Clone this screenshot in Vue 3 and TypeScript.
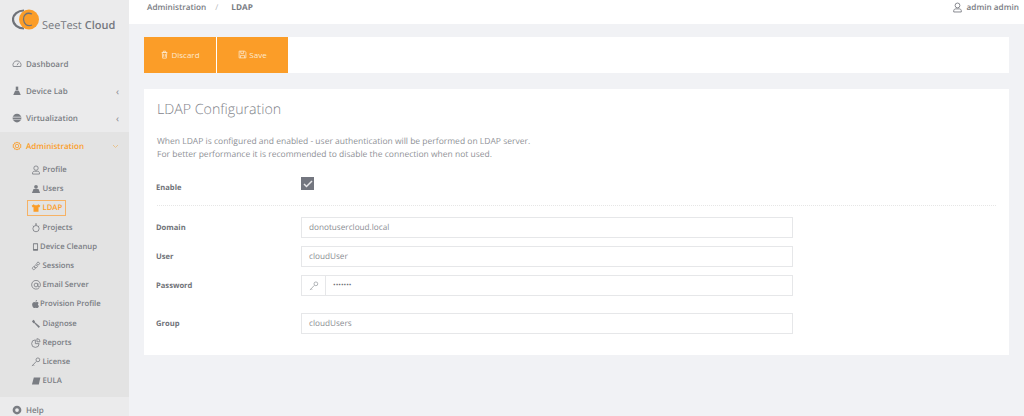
<script setup lang="ts">
interface Shape {
  d: string;
  solid?: boolean;
}

interface SubItem {
  label: string;
  icon: string;
  active?: boolean;
  narrow?: boolean;
}

const icons: Record<string, Shape[]> = {
  gauge: [{ d: 'M2 12a6.500 6.500 0 1 1 12 0zM8 10l2.500-4' }],
  flask: [
    { d: 'M6 1h4v6h-4z', solid: true },
    { d: 'M5 7.500h6l3 7H2z', solid: true }
  ],
  globe: [{ d: 'M8 1a7 7 0 1 1 0 14A7 7 0 0 1 8 1zM1 6h14v1H1zM1 9.500h14v1H1z', solid: true }],
  gear: [{ d: 'M8 1.500l1.500 1.800 2.300-.4.500 2.300 2.200 1L13.400 8l1.100 1.800-2.200 1-.5 2.300-2.300-.4L8 14.500l-1.500-1.800-2.300.4-.5-2.300-2.200-1L2.600 8 1.500 6.200l2.200-1 .5-2.300 2.300.4zM8 5.200a2.800 2.800 0 1 0 0 5.600 2.800 2.800 0 0 0 0-5.600z' }],
  user: [{ d: 'M8 1.500a3.500 3.500 0 1 1 0 7 3.500 3.500 0 0 1 0-7zM2.500 14.500v-2c0-1.500 1.500-2.500 3-2.500h5c1.500 0 3 1 3 2.500v2z' }],
  users: [
    { d: 'M8 1.500a3 3 0 1 1 0 6 3 3 0 0 1 0-6z', solid: true },
    { d: 'M4 8h8l2.500 6.500h-13z', solid: true }
  ],
  team: [{ d: 'M4.500 2L6 3.500h4L11.500 2 15 4.500 13 7l-1-.5V14H4V6.500L3 7 1 4.500z', solid: true }],
  bulb: [{ d: 'M8 4a5 5 0 1 1 0 10A5 5 0 0 1 8 4zM6.500 1.500h3M8 1.500V4M3 4.500l1.500 1.500M13 4.500L11.500 6' }],
  phone: [{ d: 'M4.500 1.500h7a1 1 0 0 1 1 1v11a1 1 0 0 1-1 1h-7a1 1 0 0 1-1-1v-11a1 1 0 0 1 1-1zM5 3v8.500h6V3z', solid: true }],
  link: [{ d: 'M2.500 10.500a2.200 2.200 0 1 1 3 3 2.200 2.200 0 0 1-3-3zM6 7.500a2.200 2.200 0 1 1 3 3 2.200 2.200 0 0 1-3-3zM9.500 3a2.200 2.200 0 1 1 3 3 2.200 2.200 0 0 1-3-3z' }],
  at: [{ d: 'M13 12.500A7 7 0 1 1 15 8v1a2 2 0 0 1-4 0V5M11 8a3 3 0 1 1-6 0 3 3 0 0 1 6 0z' }],
  apple: [
    { d: 'M8 5c1-.6 2.800-1.200 4.300-.2.700.4 1.100 1 1.400 1.400-2.200 1.300-1.800 4.300.5 5.200-.7 1.800-2 3.800-3.200 3.800-1 0-1.500-.6-2.600-.6s-1.700.6-2.600.6C4 15.200 2 12 2 9c0-3 2-4.700 3.800-4.700.9 0 1.600.4 2.200.7z', solid: true },
    { d: 'M8 3.800C8 2.300 9.200 1 10.800.8c.1 1.700-1.200 3-2.800 3z', solid: true }
  ],
  wrench: [{ d: 'M1.500 3.500L4 1l2.500 2.500-.7 1.300 8.500 7.200-1.800 2.300L5 6.200l-1.200.6z', solid: true }],
  chart: [{ d: 'M7 3a6 6 0 1 0 6 6H7zM9.500 1v5h5a5 5 0 0 0-5-5z' }],
  key: [{ d: 'M11 1.500a3 3 0 1 1 0 6 3 3 0 0 1 0-6zM8.500 7L1.500 14.500M3.500 12.500l1.500 1.500' }],
  book: [{ d: 'M4.500 2.500H15l-2.500 11H1.500z', solid: true }],
  lifebuoy: [{ d: 'M8 1a7 7 0 1 1 0 14A7 7 0 0 1 8 1zM8 5a3 3 0 1 0 0 6 3 3 0 0 0 0-6z', solid: true }],
  trash: [{ d: 'M3 4.500h10M6 4.500V2h4v2.500M4 4.500l.7 10h6.600l.7-10zM6.500 7v5M9.500 7v5' }],
  save: [{ d: 'M2 2h10l2 2v10H2zM5 2v4h5V2M4.500 14V9.500h7V14' }]
};

const subItems: SubItem[] = [
  { label: 'Profile', icon: 'user' },
  { label: 'Users', icon: 'users' },
  { label: 'LDAP', icon: 'team', active: true },
  { label: 'Projects', icon: 'bulb' },
  { label: 'Device Cleanup', icon: 'phone', narrow: true },
  { label: 'Sessions', icon: 'link' },
  { label: 'Email Server', icon: 'at' },
  { label: 'Provision Profile', icon: 'apple', narrow: true },
  { label: 'Diagnose', icon: 'wrench' },
  { label: 'Reports', icon: 'chart' },
  { label: 'License', icon: 'key' },
  { label: 'EULA', icon: 'book' }
];

const topItems = [
  { label: 'Dashboard', icon: 'gauge', arrow: false },
  { label: 'Device Lab', icon: 'flask', arrow: true },
  { label: 'Virtualization', icon: 'globe', arrow: true }
];

const fields = [
  { label: 'Domain', value: 'donotusercloud.local' },
  { label: 'User', value: 'cloudUser' }
];
</script>

<template>
  <div class="page">
    <aside class="sidebar">
      <div class="logo">
        <svg class="logo-mark" width="28" height="26" viewBox="0 0 28 26">
          <path d="M12 1.500A11 9 0 0 0 12 19.500" fill="none" stroke="#6f7278" stroke-width="2.200" />
          <circle cx="17" cy="10.500" r="10" fill="#fb9d28" />
          <path d="M20 5C14 2.500 11 7 11.500 10.500 12 15 15 18 20 16" fill="none" stroke="#6f7278" stroke-width="1.300" />
        </svg>
        <span class="logo-text">SeeTest <b>Cloud</b></span>
      </div>

      <nav class="nav">
        <a v-for="item in topItems" :key="item.label" class="nav-item">
          <svg class="icon" viewBox="0 0 16 16">
            <path
              v-for="shape in icons[item.icon]"
              :key="shape.d"
              :d="shape.d"
              :class="shape.solid ? 'solid' : 'line'"
            />
          </svg>
          <span>{{ item.label }}</span>
          <span v-if="item.arrow" class="chevron">‹</span>
        </a>

        <div class="group">
          <a class="nav-item nav-item--open">
            <svg class="icon" viewBox="0 0 16 16">
              <path :d="icons.gear[0].d" class="line" />
            </svg>
            <span>Administration</span>
            <svg class="chevron-down" width="7" height="5" viewBox="0 0 7 5">
              <path d="M1 1l2.500 2.500L6 1" />
            </svg>
          </a>
          <a
            v-for="sub in subItems"
            :key="sub.label"
            class="sub-item"
            :class="{ 'sub-item--active': sub.active, 'sub-item--narrow': sub.narrow }"
          >
            <svg class="icon icon--sub" viewBox="0 0 16 16">
              <path
                v-for="shape in icons[sub.icon]"
                :key="shape.d"
                :d="shape.d"
                :class="shape.solid ? 'solid' : 'line'"
              />
            </svg>
            <span>{{ sub.label }}</span>
          </a>
        </div>

        <a class="nav-item nav-item--help">
          <svg class="icon" viewBox="0 0 16 16">
            <path :d="icons.lifebuoy[0].d" class="solid" />
          </svg>
          <span>Help</span>
        </a>
      </nav>
    </aside>

    <div class="main">
      <header class="topbar">
        <div class="crumbs">
          <span>Administration</span>
          <span class="crumb-sep">/</span>
          <b>LDAP</b>
        </div>
        <div class="account">
          <svg class="icon icon--account" viewBox="0 0 16 16">
            <path :d="icons.user[0].d" class="line" />
          </svg>
          <span>admin admin</span>
        </div>
      </header>

      <div class="content">
        <div class="toolbar">
          <button class="btn" type="button">
            <svg class="btn-icon" viewBox="0 0 16 16"><path :d="icons.trash[0].d" /></svg>
            Discard
          </button>
          <button class="btn" type="button">
            <svg class="btn-icon" viewBox="0 0 16 16"><path :d="icons.save[0].d" /></svg>
            Save
          </button>
        </div>

        <section class="panel">
          <h1>LDAP Configuration</h1>
          <p class="intro">
            When LDAP is configured and enabled - user authentication will be performed on LDAP server.<br />
            For better performance it is recommended to disable the connection when not used.
          </p>

          <div class="row row--enable">
            <label>Enable</label>
            <span class="checkbox">
              <svg width="10" height="8" viewBox="0 0 10 8"><path d="M1 4l2.500 2.500L9 1" /></svg>
            </span>
          </div>

          <div class="divider"></div>

          <div v-for="field in fields" :key="field.label" class="row">
            <label>{{ field.label }}</label>
            <div class="input">{{ field.value }}</div>
          </div>

          <div class="row">
            <label>Password</label>
            <div class="input input--group">
              <span class="addon">
                <svg class="addon-icon" viewBox="0 0 16 16"><path :d="icons.key[0].d" /></svg>
              </span>
              <span class="dots">•••••••</span>
            </div>
          </div>

          <div class="row row--group">
            <label>Group</label>
            <div class="input">cloudUsers</div>
          </div>
        </section>
      </div>
    </div>
  </div>
</template>

<style>
html,
body {
  margin: 0;
  background: #f1f2f5;
}
</style>

<style scoped>
.page {
  display: flex;
  width: 1024px;
  height: 416px;
  overflow: hidden;
  font-family: "Open Sans", "Liberation Sans", sans-serif;
  color: #6f7278;
  text-rendering: geometricPrecision;
}

.sidebar {
  width: 129px;
  flex: none;
  background: #ebebec;
}

.logo {
  display: flex;
  align-items: flex-start;
  gap: 2px;
  height: 50.500px;
  padding: 9px 0 0 12px;
  box-sizing: border-box;
}

.logo-mark {
  flex: none;
}

.logo-text {
  margin-top: 9px;
  font-size: 11px;
  line-height: 16px;
  white-space: nowrap;
  color: #75787e;
}

.logo-text b {
  font-weight: 600;
}

.nav-item {
  display: flex;
  align-items: center;
  height: 27.200px;
  padding: 0 10px 0 12px;
  font-size: 8px;
  font-weight: 600;
  color: #7a7d83;
}

.icon {
  width: 10px;
  height: 10px;
  flex: none;
  margin-right: 4px;
}

.icon--sub {
  margin-right: 1.500px;
}

.icon .line {
  fill: none;
  stroke: currentColor;
  stroke-width: 1.300;
}

.icon .solid {
  fill: currentColor;
  fill-rule: evenodd;
}

.chevron {
  margin-left: auto;
  font-size: 10px;
  font-weight: 400;
  line-height: 10px;
  color: #8b8e93;
}

.chevron-down {
  margin-left: auto;
}

.chevron-down path {
  fill: none;
  stroke: #e9c48f;
  stroke-width: 1;
}

.group {
  height: 264.500px;
  background: #e3e3e3;
}

.nav-item--open {
  height: 28.400px;
  color: #fb9d28;
}

.sub-item {
  display: flex;
  align-items: center;
  height: 19.200px;
  padding-left: 31px;
  box-sizing: border-box;
  font-size: 7.700px;
  font-weight: 600;
  color: #7a7d83;
}

.sub-item--narrow .icon--sub {
  width: 9px;
  margin-right: 0;
}

.sub-item--active {
  width: fit-content;
  height: 16px;
  margin: 1.600px 0 1.600px 27px;
  padding: 0 2.500px 0 3px;
  border: 1.500px solid #f6b265;
  color: #fb9d28;
}

.nav-item--help {
  height: 27px;
}

.main {
  flex: 1;
  display: flex;
  flex-direction: column;
  min-width: 0;
}

.topbar {
  display: flex;
  justify-content: space-between;
  align-items: flex-start;
  height: 24px;
  padding: 0 5px 0 18px;
  box-sizing: border-box;
  background: #fff;
  font-size: 8.200px;
  font-weight: 600;
  line-height: 15px;
  color: #7a7d83;
}

.crumbs {
  display: flex;
}

.crumbs b {
  font-weight: 700;
}

.crumb-sep {
  margin: 0 13px 0 9px;
  font-weight: 400;
  color: #b5b7ba;
}

.account {
  display: flex;
  align-items: center;
}

.icon--account {
  width: 11px;
  height: 11px;
}

.content {
  flex: 1;
  padding: 13px 15px 0;
  background: #f1f2f5;
}

.toolbar {
  display: flex;
  gap: 1px;
  height: 36px;
  margin-bottom: 16px;
  background: #fff;
}

.btn {
  display: flex;
  align-items: center;
  justify-content: center;
  gap: 2px;
  width: 72px;
  padding: 0 0 1px;
  border: none;
  background: #fb9d28;
  color: #fde9d0;
  font-family: inherit;
  font-size: 8px;
}

.btn + .btn {
  width: 71px;
}

.btn-icon {
  width: 9px;
  height: 9px;
}

.btn-icon path {
  fill: none;
  stroke: #fde9d0;
  stroke-width: 1.400;
}

.panel {
  height: 266px;
  padding: 10px 13px 0;
  box-sizing: border-box;
  background: #fff;
}

h1 {
  margin: 0;
  font-size: 14.200px;
  font-weight: 300;
  line-height: 21px;
  color: #7f838a;
}

.intro {
  margin: 15px 0 0;
  font-size: 8.500px;
  line-height: 13px;
  color: #8f9297;
}

.row {
  display: flex;
  align-items: center;
  height: 21px;
  margin-bottom: 8px;
}

.row label {
  width: 145px;
  flex: none;
  margin-left: -1px;
  font-size: 7.600px;
  font-weight: 700;
  color: #6f7278;
}

.row--enable {
  align-items: flex-start;
  margin-top: 16px;
  margin-bottom: 7px;
}

.row--enable label {
  margin-top: 6px;
}

.checkbox {
  display: flex;
  align-items: center;
  justify-content: center;
  width: 13px;
  height: 13px;
  background: #73767f;
}

.checkbox path {
  fill: none;
  stroke: #e8e8ea;
  stroke-width: 1.500;
}

.divider {
  margin-bottom: 11px;
  border-top: 1px dotted #e6e6e6;
}

.input {
  display: flex;
  align-items: center;
  width: 492px;
  height: 21px;
  padding-left: 7px;
  box-sizing: border-box;
  border: 1px solid #e6e7e9;
  font-size: 8.200px;
  color: #8b8e93;
}

.input--group {
  padding-left: 0;
}

.addon {
  display: flex;
  align-items: center;
  justify-content: center;
  width: 23px;
  height: 100%;
  border-right: 1px solid #e6e7e9;
}

.addon-icon {
  width: 10px;
  height: 10px;
}

.addon-icon path {
  fill: none;
  stroke: #9a9da2;
  stroke-width: 1.200;
}

.dots {
  margin-left: 7px;
  font-size: 7px;
  color: #6f7278;
}

.row--group {
  margin-top: 17px;
}
</style>
